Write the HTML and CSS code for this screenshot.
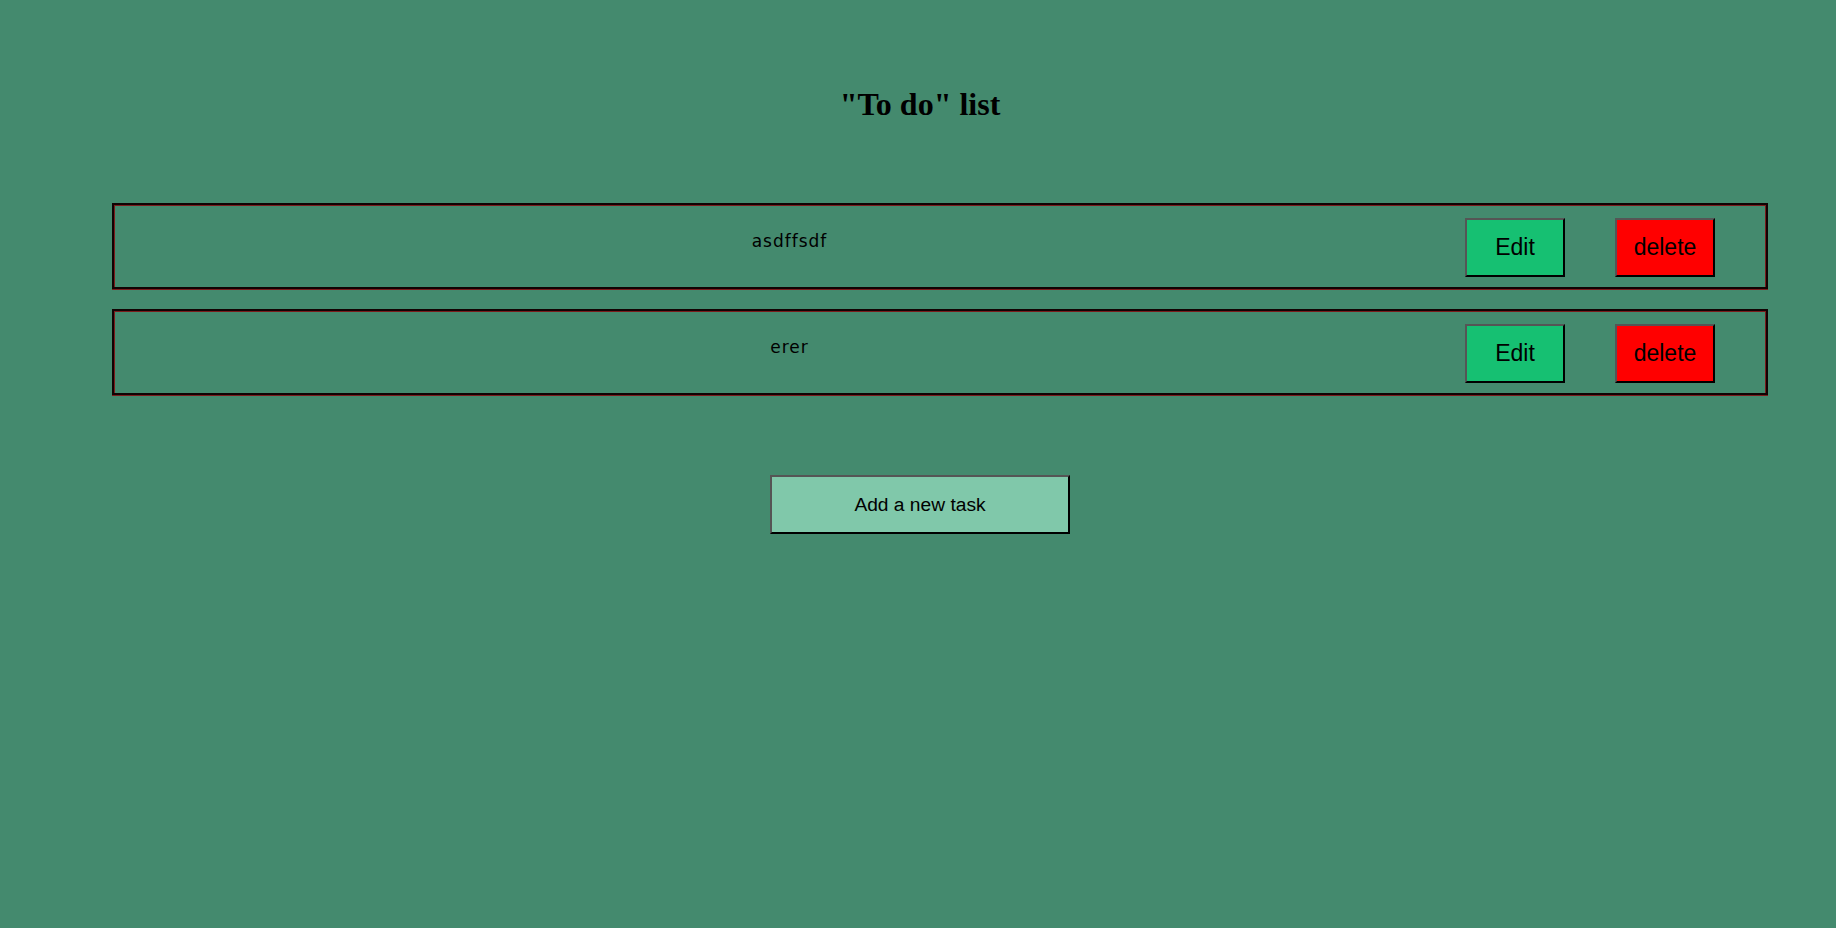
FILE: index.html
```html
<!DOCTYPE html>
<html lang="en">
<head>
<meta charset="utf-8">
<title>"To do" list</title>
<link rel="stylesheet" href="styles.css">
</head>
<body>
<main class="page">
  <h1 class="title">"To do" list</h1>
  <ul class="tasks">
    <li class="task">
      <span class="task-text">asdffsdf</span>
      <button class="btn btn-edit">Edit</button>
      <button class="btn btn-delete">delete</button>
    </li>
    <li class="task">
      <span class="task-text">erer</span>
      <button class="btn btn-edit">Edit</button>
      <button class="btn btn-delete">delete</button>
    </li>
  </ul>
  <button class="add-btn">Add a new task</button>
</main>
</body>
</html>
```
FILE: styles.css
```css
html, body {
  margin: 0;
  padding: 0;
}

body {
  background: #448a6e;
  min-height: 928px;
  font-family: "Liberation Sans", Arial, sans-serif;
  color: #000;
}

.page {
  display: flex;
  flex-direction: column;
  padding: 0 0 0 4px;
}

.title {
  margin: 0 0 80px 0;
  padding-top: 86px;
  font-family: "Liberation Serif", "Times New Roman", serif;
  font-weight: bold;
  font-size: 32px;
  line-height: 37px;
  text-align: center;
}

.tasks {
  list-style: none;
  margin: 0 68px 0 108px;
  padding: 0;
  display: flex;
  flex-direction: column;
  gap: 20px;
}

.task {
  box-sizing: border-box;
  height: 86px;
  display: flex;
  align-items: flex-start;
  padding: 13px 51px 0 0;
  border: 2px solid #110303;
  box-shadow: inset 1px 1px 0 #7a1c1c, inset -1px 0 0 #7a1c1c, 0 1px 0 #7a1c1c;
}

.task-text {
  flex: 1;
  text-align: center;
  padding-top: 12px;
  font-family: "Comic Sans MS", "DejaVu Sans", sans-serif;
  font-size: 17px;
  letter-spacing: 1px;
  line-height: 22px;
}

.btn {
  box-sizing: border-box;
  width: 100px;
  height: 59px;
  margin: 0;
  padding: 0;
  font-family: "Liberation Sans", Arial, sans-serif;
  font-size: 23px;
  color: #000;
  border-style: solid;
  border-width: 2px;
  border-color: #555 #000 #000 #555;
  cursor: pointer;
}

.btn-edit {
  background: #16c072;
}

.btn-delete {
  margin-left: 50px;
  background: #ff0000;
}

.add-btn {
  box-sizing: border-box;
  align-self: center;
  width: 300px;
  height: 59px;
  margin: 80px 0 0 0;
  padding: 0;
  background: #80c8aa;
  font-family: "Liberation Sans", Arial, sans-serif;
  font-size: 19.2px;
  color: #000;
  border-style: solid;
  border-width: 2px;
  border-color: #555 #000 #000 #555;
  cursor: pointer;
}
```
